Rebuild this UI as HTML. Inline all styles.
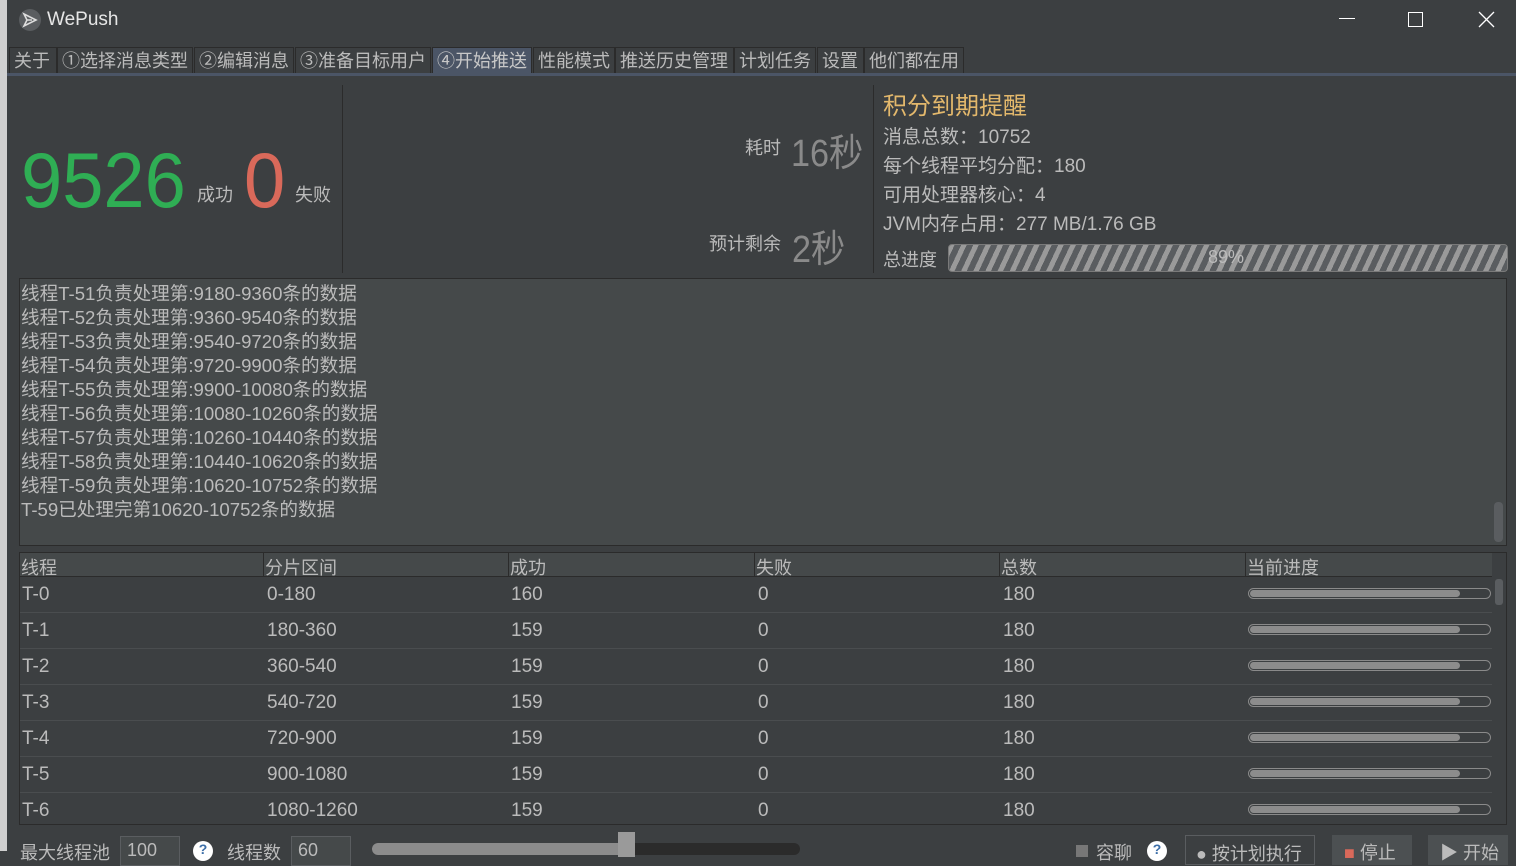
<!DOCTYPE html>
<html><head><meta charset="utf-8"><style>
*{margin:0;padding:0;box-sizing:border-box}
body{width:1516px;height:851px;overflow:hidden;background:#3c3f41;font-family:"Liberation Sans","Noto Sans CJK SC",sans-serif;color:#bbbbbb;position:relative}
.abs{position:absolute;white-space:nowrap}
.lb{position:absolute;left:0;top:0;width:7px;height:851px;background:#cfcfcf}
.tab{position:absolute;top:47px;height:26px;border:1px solid #2b2b2b;border-bottom:none;background:#3c3f41;font-size:18px;line-height:26px;padding:0 4px;color:#bbb}
.tab.sel{background:#4b5566;color:#c8c8c8}
.log{position:absolute;left:19px;top:278px;width:1488px;height:268px;background:#45494a;border:1px solid #2b2b2b}
.log div{font-size:18.6px;line-height:24px;color:#bbb;padding-left:1px}
.row{position:absolute;left:20px;width:1472px;height:36px;border-bottom:1px solid #4a4d4f;font-size:19px}
.row span{position:absolute;top:7px}
.pb{position:absolute;left:1228px;top:11px;width:243px;height:11px;border:1px solid #8a8a8a;border-radius:6px;background:#3c3f41}
.pb i{position:absolute;left:1px;top:1px;width:210px;height:7px;background:#8c8c8c;border-radius:4px}
</style></head><body>
<div class="lb"></div>
<svg class="abs" style="left:18px;top:8px" width="24" height="24" viewBox="0 0 24 24"><circle cx="12" cy="12" r="11" fill="#5a5d60"/><path d="M6 6 L18 12 L6 18 L9 12 Z M9 12 H14" fill="none" stroke="#ddd" stroke-width="1.6"/></svg>
<div class="abs" style="left:47px;top:9px;font-size:19px;color:#e6e6e6">WePush</div>
<div class="abs" style="left:1339px;top:18px;width:16px;height:1px;background:#fff"></div>
<div class="abs" style="left:1408px;top:12px;width:15px;height:15px;border:1px solid #fff"></div>
<svg class="abs" style="left:1478px;top:11px" width="17" height="17"><path d="M1 1L16 16M16 1L1 16" stroke="#fff" stroke-width="1.3"/></svg>
<div class="tab" style="left:9px;width:48px">关于</div>
<div class="tab" style="left:57px;width:136px">①选择消息类型</div>
<div class="tab" style="left:194px;width:100px">②编辑消息</div>
<div class="tab" style="left:295px;width:136px">③准备目标用户</div>
<div class="tab sel" style="left:432px;width:100px">④开始推送</div>
<div class="tab" style="left:533px;width:82px">性能模式</div>
<div class="tab" style="left:615px;width:119px">推送历史管理</div>
<div class="tab" style="left:734px;width:82px">计划任务</div>
<div class="tab" style="left:817px;width:47px">设置</div>
<div class="tab" style="left:864px;width:100px">他们都在用</div>
<div class="abs" style="left:7px;top:73px;width:1509px;height:3px;background:#4b5566"></div>
<div class="abs" style="left:21px;top:130px;font-size:78px;color:#2fae54;line-height:100px;transform:scaleX(.95);transform-origin:left">9526</div>
<div class="abs" style="left:197px;top:181px;font-size:18px">成功</div>
<div class="abs" style="left:244px;top:130px;font-size:78px;color:#d9695a;line-height:100px;transform:scaleX(.95);transform-origin:left">0</div>
<div class="abs" style="left:295px;top:181px;font-size:18px">失败</div>
<div class="abs" style="left:342px;top:85px;width:1px;height:188px;background:#2b2b2b"></div>
<div class="abs" style="left:745px;top:134px;font-size:18px">耗时</div>
<div class="abs" style="left:791px;top:122px;font-size:38px;color:#8a8a8a;transform:scaleX(.9);transform-origin:left">16秒</div>
<div class="abs" style="left:709px;top:230px;font-size:18px">预计剩余</div>
<div class="abs" style="left:792px;top:218px;font-size:38px;color:#8a8a8a;transform:scaleX(.9);transform-origin:left">2秒</div>
<div class="abs" style="left:873px;top:85px;width:1px;height:188px;background:#2b2b2b"></div>
<div class="abs" style="left:883px;top:86px;font-size:24px;color:#e3b86c">积分到期提醒</div>
<div class="abs" style="left:883px;top:122px;font-size:19px">消息总数：10752</div>
<div class="abs" style="left:883px;top:151px;font-size:19px">每个线程平均分配：180</div>
<div class="abs" style="left:883px;top:180px;font-size:19px">可用处理器核心：4</div>
<div class="abs" style="left:883px;top:209px;font-size:19px">JVM内存占用：277 MB/1.76 GB</div>
<div class="abs" style="left:883px;top:246px;font-size:18px">总进度</div>
<div class="abs" style="left:948px;top:244px;width:560px;height:28px;border:1px solid #7a7a7a;border-radius:4px;background:repeating-linear-gradient(115deg,#9a9a9a 0 5px,#5a5d60 5px 11px)"></div>
<div class="abs" style="left:1208px;top:247px;font-size:18px;color:#bbb">89%</div>
<div class="log"><div style="height:3px;padding:0"></div>
<div>线程T-51负责处理第:9180-9360条的数据</div>
<div>线程T-52负责处理第:9360-9540条的数据</div>
<div>线程T-53负责处理第:9540-9720条的数据</div>
<div>线程T-54负责处理第:9720-9900条的数据</div>
<div>线程T-55负责处理第:9900-10080条的数据</div>
<div>线程T-56负责处理第:10080-10260条的数据</div>
<div>线程T-57负责处理第:10260-10440条的数据</div>
<div>线程T-58负责处理第:10440-10620条的数据</div>
<div>线程T-59负责处理第:10620-10752条的数据</div>
<div>T-59已处理完第10620-10752条的数据</div>
</div>
<div class="abs" style="left:1494px;top:502px;width:9px;height:40px;background:#5a5d60;border-radius:4px"></div>
<div class="abs" style="left:19px;top:552px;width:1488px;height:273px;border:1px solid #2b2b2b"></div>
<div class="abs" style="left:20px;top:553px;width:1472px;height:24px;background:#45494a;border-bottom:1px solid #2b2b2b;font-size:18px">
<span class="abs" style="left:1px;top:1px">线程</span><span class="abs" style="left:245px;top:1px">分片区间</span><span class="abs" style="left:490px;top:1px">成功</span><span class="abs" style="left:736px;top:1px">失败</span><span class="abs" style="left:981px;top:1px">总数</span><span class="abs" style="left:1227px;top:1px">当前进度</span>
<i class="abs" style="left:243px;top:0;width:1px;height:24px;background:#2b2b2b"></i><i class="abs" style="left:488px;top:0;width:1px;height:24px;background:#2b2b2b"></i><i class="abs" style="left:734px;top:0;width:1px;height:24px;background:#2b2b2b"></i><i class="abs" style="left:979px;top:0;width:1px;height:24px;background:#2b2b2b"></i><i class="abs" style="left:1225px;top:0;width:1px;height:24px;background:#2b2b2b"></i></div>
<div class="abs" style="left:1495px;top:579px;width:8px;height:26px;background:#5a5d60;border-radius:3px"></div>
<div class="row" style="top:577px"><span style="left:2px">T-0</span><span style="left:247px">0-180</span><span style="left:491px">160</span><span style="left:738px">0</span><span style="left:983px">180</span><div class="pb"><i></i></div></div>
<div class="row" style="top:613px"><span style="left:2px">T-1</span><span style="left:247px">180-360</span><span style="left:491px">159</span><span style="left:738px">0</span><span style="left:983px">180</span><div class="pb"><i></i></div></div>
<div class="row" style="top:649px"><span style="left:2px">T-2</span><span style="left:247px">360-540</span><span style="left:491px">159</span><span style="left:738px">0</span><span style="left:983px">180</span><div class="pb"><i></i></div></div>
<div class="row" style="top:685px"><span style="left:2px">T-3</span><span style="left:247px">540-720</span><span style="left:491px">159</span><span style="left:738px">0</span><span style="left:983px">180</span><div class="pb"><i></i></div></div>
<div class="row" style="top:721px"><span style="left:2px">T-4</span><span style="left:247px">720-900</span><span style="left:491px">159</span><span style="left:738px">0</span><span style="left:983px">180</span><div class="pb"><i></i></div></div>
<div class="row" style="top:757px"><span style="left:2px">T-5</span><span style="left:247px">900-1080</span><span style="left:491px">159</span><span style="left:738px">0</span><span style="left:983px">180</span><div class="pb"><i></i></div></div>
<div class="row" style="top:793px;border-bottom:none"><span style="left:2px">T-6</span><span style="left:247px">1080-1260</span><span style="left:491px">159</span><span style="left:738px">0</span><span style="left:983px">180</span><div class="pb"><i></i></div></div>
<div class="abs" style="left:20px;top:839px;font-size:18px">最大线程池</div>
<div class="abs" style="left:120px;top:836px;width:60px;height:30px;border:1px solid #5a5d60;background:#45494a;font-size:18px;padding:3px 6px">100</div>
<div class="abs" style="left:193px;top:841px;width:20px;height:20px;border-radius:50%;background:#fff;color:#3c6ea8;font-size:14px;text-align:center;font-weight:bold">?</div>
<div class="abs" style="left:227px;top:839px;font-size:18px">线程数</div>
<div class="abs" style="left:291px;top:836px;width:60px;height:30px;border:1px solid #5a5d60;background:#45494a;font-size:18px;padding:3px 6px">60</div>
<div class="abs" style="left:372px;top:843px;width:428px;height:12px;background:#2b2b2b;border-radius:6px"></div>
<div class="abs" style="left:372px;top:843px;width:254px;height:12px;background:#8c8c8c;border-radius:6px 0 0 6px"></div>
<div class="abs" style="left:618px;top:832px;width:17px;height:25px;background:#9a9a9a"></div>
<div class="abs" style="left:1076px;top:845px;width:12px;height:12px;background:#777"></div>
<div class="abs" style="left:1096px;top:839px;font-size:18px">容聊</div>
<div class="abs" style="left:1147px;top:841px;width:20px;height:20px;border-radius:50%;background:#fff;color:#3c6ea8;font-size:14px;text-align:center;font-weight:bold">?</div>
<div class="abs" style="left:1185px;top:835px;width:130px;height:30px;border:1px solid #5a5d60;font-size:18px;padding:4px 10px">● 按计划执行</div>
<div class="abs" style="left:1332px;top:835px;width:80px;height:30px;background:#4c5052;font-size:18px;padding:4px 12px"><span style="color:#d9695a">■</span> 停止</div>
<div class="abs" style="left:1428px;top:835px;width:80px;height:30px;background:#4c5052;font-size:18px;padding:4px 12px">▶ 开始</div>
</body></html>
